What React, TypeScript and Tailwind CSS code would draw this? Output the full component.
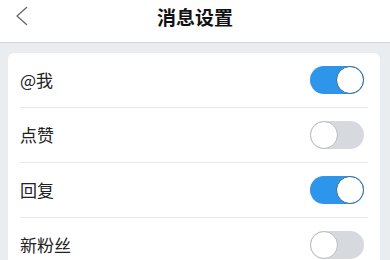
import React from "react";

function Toggle({ on }: { on: boolean }) {
  return (
    <div
      className={
        "relative w-[54px] h-[28px] rounded-full " +
        (on ? "bg-[#2d95ea]" : "bg-[#d6dadf]")
      }
    >
      <div
        className={
          "absolute top-0 w-[28px] h-[28px] rounded-full bg-white border-[1.5px] " +
          (on ? "right-0 border-[#2f6a9c]" : "left-0 border-[#b9bcbf]")
        }
      />
    </div>
  );
}

const rows = [
  { label: "@我", on: true },
  { label: "点赞", on: false },
  { label: "回复", on: true },
  { label: "新粉丝", on: false },
];

export default function App() {
  return (
    <div
      className="w-[390px] h-[260px] overflow-hidden bg-[#e9edf0]"
      style={{ fontFamily: '"Noto Sans CJK SC", "Noto Sans", sans-serif' }}
    >
      <div className="relative h-[43px] bg-white border-b border-[#d3d7da] flex justify-center items-start">
        <svg
          className="absolute left-[15px] top-[6px]"
          width="13"
          height="20"
          viewBox="0 0 13 20"
          fill="none"
        >
          <path d="M11.5 1.5 L2 10 L11.5 18.5" stroke="#6b6b6b" strokeWidth="1.4" strokeLinecap="round" strokeLinejoin="round" />
        </svg>
        <div className="text-[19px] leading-[34px] font-bold text-[#111]">消息设置</div>
      </div>
      <div className="ml-[8px] mr-[10px] mt-[10px] bg-white rounded-[6px]">
        {rows.map((r, i) => (
          <div key={i}>
            {i > 0 && <div className="mx-[12px] h-px bg-[#e6e8ea]" />}
            <div className="h-[54px] flex items-center justify-between pl-[12px] pr-[16px]">
              <span className="text-[17px] text-[#222]">{r.label}</span>
              <Toggle on={r.on} />
            </div>
          </div>
        ))}
      </div>
    </div>
  );
}
